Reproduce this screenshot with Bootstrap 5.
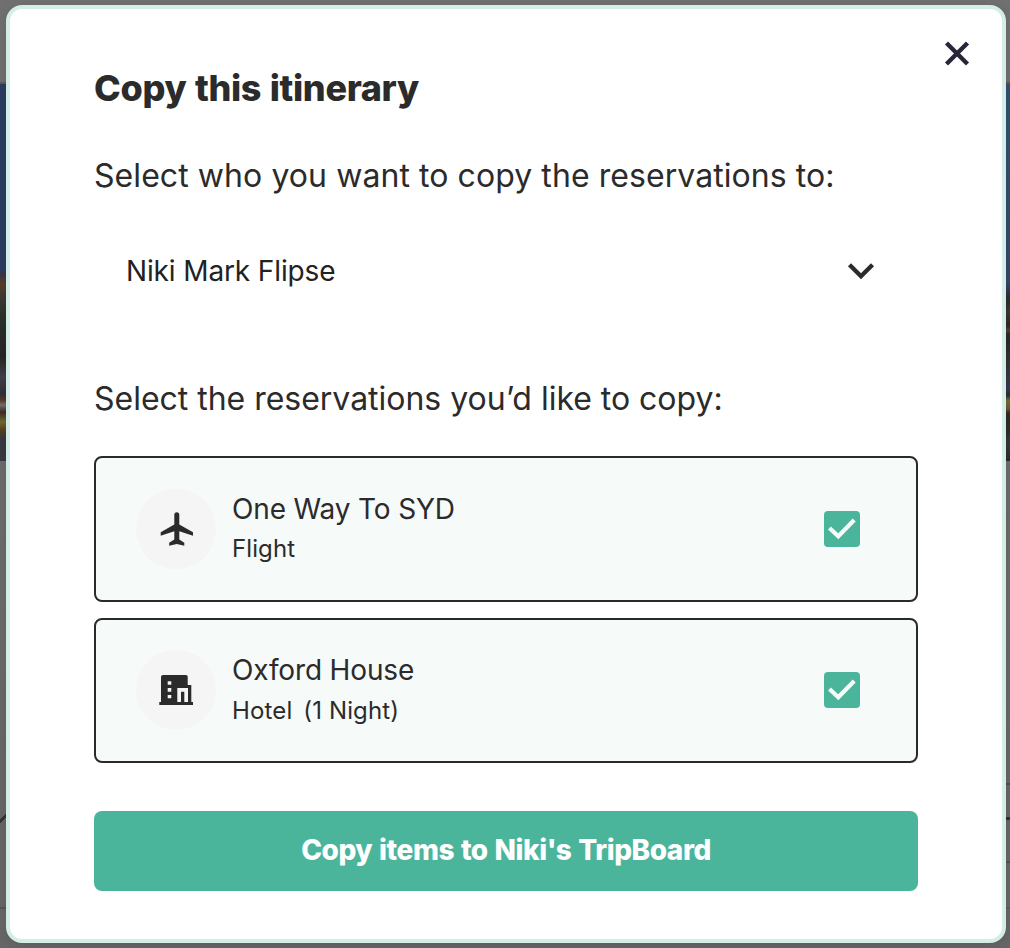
<!DOCTYPE html>
<html lang="en">
<head>
<meta charset="utf-8">
<meta name="viewport" content="width=device-width, initial-scale=1">
<title>Copy this itinerary</title>
<link href="https://cdn.jsdelivr.net/npm/bootstrap@5.3.0/dist/css/bootstrap.min.css" rel="stylesheet">
<style>
  body { font-family: Inter, "Liberation Sans", sans-serif; color: #2b2b2b; height: 948px; overflow: hidden; background: #686868; }
  .page-behind { height: 948px; padding: 5px 4px 5px 6px;
    background:
      linear-gradient(135deg, transparent 46%, #333 46% 58%, transparent 58%) 0 808px / 8px 18px no-repeat,
      linear-gradient(#565656, #565656) 0 907px / 6px 2px no-repeat,
      linear-gradient(#505050, #505050) 1006px 783px / 4px 2px no-repeat,
      linear-gradient(#303030, #303030) 1006px 817px / 4px 3px no-repeat,
      linear-gradient(#505050, #505050) 1006px 861px / 4px 2px no-repeat,
      linear-gradient(#5c5c5c, #5c5c5c) 1006px 907px / 4px 2px no-repeat,
      linear-gradient(#5d5a58 0 2px, #2b3c60 2px 186px, #3a3547 192px, #5a3d28 203px, #3c3a35 215px, #2b302b 235px, #252725 275px, #40404a 295px, #303036 312px, #55382a 318px, #77706c 323px, #3e2c20 330px, #6e6a30 340px, #59401f 348px, #3b3842 356px 379px) 0 82px / 20px 379px no-repeat,
      linear-gradient(#5d5550 0 2px, #344f70 2px 60px, #344668 202px, #292b31 216px, #3b3532 230px, #292929 244px, #54402f 248px, #282828 253px, #38363a 290px, #343a58 307px, #2b2b2b 313px, #726e3b 319px, #70532b 327px, #33291f 331px, #2d2d2d 350px, #383838 360px, #2b2b2b 379px) 990px 82px / 20px 379px no-repeat,
      linear-gradient(#707070, #6c6c6c 50%, #666 85%, #666); }
  .copy-dialog { width: 1000px; height: 938px; border: 4px solid #d4ede6; border-radius: 16px; padding: 0 84px; box-shadow: 0 2px 12px rgba(0,0,0,.1); }
  .close-x { top: 30px; right: 31px; width: 28px; height: 28px; }
  h1 { font-size: 36px; font-weight: 800; line-height: 44px; margin-top: 57px; letter-spacing: -.33px; word-spacing: 1px; }
  .prompt { font-size: 32px; line-height: 40px; letter-spacing: .07px; }
  .who { margin-top: 46px; }
  .person { height: 80px; margin-top: 35px; padding: 0 42px 0 32px; font-size: 28px; letter-spacing: -.13px; color: #222; }
  .which { margin-top: 68px; }
  .which span { letter-spacing: -.02px; }
  .stays { margin-top: 37px; gap: 16px; }
  .stay { height: 145.5px; border: 2px solid #2a2a2c; border-radius: 8px; background: #f6faf9; padding: 0 56px 0 40px; }
  .disc { width: 80px; height: 80px; background: #f5f5f5; margin-right: 16px; }
  .stay-name { font-size: 28px; line-height: 40px; letter-spacing: -.15px; }
  .stay-kind { font-size: 24px; line-height: 40px; letter-spacing: .1px; }
  .stay-kind.nights { padding-top: 1px; margin-bottom: -1px; letter-spacing: .14px; }
  .tick { width: 36px; height: 36px; border-radius: 4px; background: #4bb59c; }
  .copy-btn { height: 80px; margin-top: 48px; padding-bottom: 8px; border: 0; border-radius: 8px; background: #4bb59c; color: #fff; font-size: 28px; font-weight: 800; letter-spacing: -.45px; word-spacing: 1.2px; }
  svg { display: block; }
</style>
</head>
<body>
<div class="page-behind">
  <div class="copy-dialog bg-white position-relative d-flex flex-column">
    <button class="close-x btn p-0 border-0 position-absolute" aria-label="Close">
      <svg width="28" height="28" viewBox="0 0 28 28"><path d="M3.500 4l21 21M24.500 4l-21 21" stroke="#29263a" stroke-width="4.400" fill="none"/></svg>
    </button>
    <h1 class="mb-0"><span>Copy this itinerary</span></h1>
    <p class="prompt who mb-0"><span>Select who you want to copy the reservations to:</span></p>
    <div class="person d-flex align-items-center justify-content-between" role="button">
      <span>Niki Mark Flipse</span>
      <svg width="30" height="20" viewBox="0 0 30 20"><path d="M3.500 3.800L15 15.200 26.500 3.800" stroke="#2b2b2b" stroke-width="4.400" fill="none"/></svg>
    </div>
    <p class="prompt which mb-0"><span>Select the reservations you’d like to copy:</span></p>
    <div class="stays d-flex flex-column">
      <div class="stay d-flex align-items-center">
        <div class="disc rounded-circle d-flex align-items-center justify-content-center">
          <svg width="80" height="80" viewBox="136 489 80 80"><path fill="#2b2b2b" d="M174.300 514.700a2.500 2.500 0 0 1 5 0V524.500L193 532.200V535.700L179.300 531.300V539.500L184.300 542.700V545.700L176.800 544 169.200 545.700V542.700L174.300 539.500V531.300L160.700 535.700V532.200L174.300 524.500Z"/></svg>
        </div>
        <div class="flex-grow-1">
          <div class="stay-name"><span>One Way To SYD</span></div>
          <div class="stay-kind"><span>Flight</span></div>
        </div>
        <div class="tick"><svg width="36" height="36" viewBox="0 0 36 36"><path d="M5.500 17L14.300 25.200 30.200 9" fill="none" stroke="#f6faf9" stroke-width="4.200"/></svg></div>
      </div>
      <div class="stay d-flex align-items-center">
        <div class="disc rounded-circle d-flex align-items-center justify-content-center">
          <svg width="80" height="80" viewBox="136 650 80 80"><path fill="#2b2b2b" fill-rule="evenodd" d="M163 675H186Q187.700 675 187.700 676.700V685H191.300V702H193V705H159.300V702H161V677Q161 675 163 675ZM167.700 681.300V684.700H171.300V681.300ZM167.700 688V691.700H171.300V688ZM167.700 695V698.300H171.300V695ZM177.300 688V702H181V691.700H184.300V702H188V688Z"/></svg>
        </div>
        <div class="flex-grow-1">
          <div class="stay-name"><span>Oxford House</span></div>
          <div class="stay-kind nights"><span>Hotel</span> <span class="ms-1">(1 Night)</span></div>
        </div>
        <div class="tick"><svg width="36" height="36" viewBox="0 0 36 36"><path d="M5.500 17L14.300 25.200 30.200 9" fill="none" stroke="#f6faf9" stroke-width="4.200"/></svg></div>
      </div>
    </div>
    <button class="copy-btn btn w-100"><span>Copy items to Niki's TripBoard</span></button>
  </div>
</div>
<script src="https://cdn.jsdelivr.net/npm/bootstrap@5.3.0/dist/js/bootstrap.bundle.min.js"></script>
</body>
</html>
